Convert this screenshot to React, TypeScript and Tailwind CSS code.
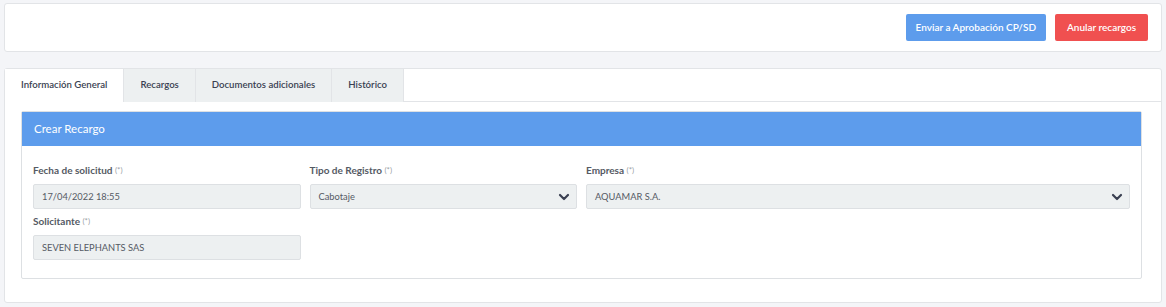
import React from 'react';

const font = { fontFamily: 'Lato, "Noto Sans", sans-serif' };

const Req = () => <span className="text-[8px] font-normal text-[#9aa0a6]">(*)</span>;

const Chevron = () => (
  <svg width="12" height="12" viewBox="0 0 12 12" className="text-[#3a3f51]">
    <path d="M2 4l4 4 4-4" fill="none" stroke="currentColor" strokeWidth="2.2" strokeLinecap="round" strokeLinejoin="round" />
  </svg>
);

const Field: React.FC<{ label: string; value: string; select?: boolean; className?: string }> = ({
  label,
  value,
  select,
  className,
}) => (
  <div className={className}>
    <div className="h-[24px] flex items-center text-[10px] font-bold text-[#555a64]">
      {label}&nbsp;<Req />
    </div>
    <div className="mt-[2px] h-[25px] rounded-[2px] border border-[#dde0e3] bg-[#edf0f1] flex items-center justify-between pl-[8px] pr-[6px] text-[9.3px] text-[#555a64]">
      <span>{value}</span>
      {select && <Chevron />}
    </div>
  </div>
);

export default function App() {
  const tabs = ['Información General', 'Recargos', 'Documentos adicionales', 'Histórico'];
  const [active, setActive] = React.useState(0);

  return (
    <div className="min-h-[307px] bg-[#f4f5f8] px-[4px] pt-[3px] pb-[4px]" style={font}>
      {/* Top actions */}
      <div className="h-[49px] rounded-[3px] border border-[#e2e4e7] bg-white flex items-center justify-end gap-[9px] pr-[13px]">
        <button className="h-[27px] px-[10px] rounded-[2px] bg-[#5d9cec] text-white text-[10px] font-semibold">
          Enviar a Aprobación CP/SD
        </button>
        <button className="h-[27px] px-[12px] rounded-[2px] bg-[#f05050] text-white text-[10px] font-semibold">
          Anular recargos
        </button>
      </div>

      {/* Tabs card */}
      <div className="mt-[16px] rounded-[3px] border border-[#e2e4e7] bg-white pb-[23px]">
        <div className="flex h-[33px] border-b border-[#e2e4e7]">
          {tabs.map((t, i) => (
            <button
              key={t}
              onClick={() => setActive(i)}
              className={
                i === active
                  ? 'h-[33px] px-[16px] bg-white text-[9.6px] font-semibold text-[#3a3f51] border-r border-[#e2e4e7]'
                  : 'h-[33px] px-[16px] bg-[#edf0f1] text-[9.6px] font-semibold text-[#3a3f51] border-r border-[#e2e4e7]'
              }
            >
              {t}
            </button>
          ))}
        </div>

        <div className="ml-[16px] mr-[19px] mt-[9px] rounded-[2px] border border-[#dde0e3] bg-white">
          <div className="h-[34px] bg-[#5d9cec] flex items-center px-[12px] text-white text-[11.5px]">Crear Recargo</div>
          <div className="px-[11px] pt-[12px] pb-[18px] grid grid-cols-4 gap-x-[9px]">
            <Field label="Fecha de solicitud" value="17/04/2022 18:55" />
            <Field label="Tipo de Registro" value="Cabotaje" select />
            <Field label="Empresa" value="AQUAMAR S.A." select className="col-span-2" />
            <Field label="Solicitante" value="SEVEN ELEPHANTS SAS" />
          </div>
        </div>
      </div>
    </div>
  );
}
